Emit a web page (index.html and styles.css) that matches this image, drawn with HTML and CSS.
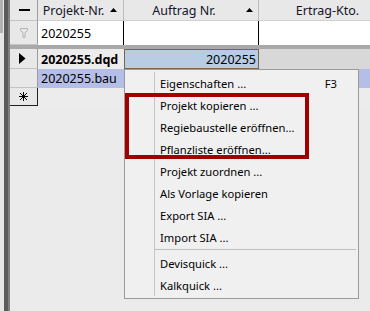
FILE: index.html
```html
<!DOCTYPE html>
<html>
<head>
<meta charset="utf-8">
<link rel="stylesheet" href="styles.css">
</head>
<body>
<div class="app">
  <div class="strip"><div class="strip-top"></div></div>
  <div class="grid">
    <!-- header -->
    <div class="sel sel-head"><span class="dash"></span></div>
    <div class="hd hd-proj"><span>Projekt-Nr.</span><svg class="sort" width="7" height="4" viewBox="0 0 7 4"><polygon points="0,4 7,4 3.5,0" fill="#000"/></svg></div>
    <div class="hd hd-auf"><span>Auftrag Nr.</span><svg class="sort" width="7" height="4" viewBox="0 0 7 4"><polygon points="0,4 7,4 3.5,0" fill="#000"/></svg></div>
    <div class="hd hd-ert"><span>Ertrag-Kto.</span></div>

    <!-- filter row -->
    <div class="sel sel-filter">
      <svg width="8" height="10" viewBox="0 0 8 10"><path d="M0.5 0.5 H7.5 V2.5 L5 4.5 V9.5 H3 V4.5 L0.5 2.5 Z" fill="none" stroke="#b4b4b4" stroke-width="1"/></svg>
    </div>
    <div class="flt flt-proj">2020255</div>
    <div class="flt flt-auf"></div>
    <div class="flt flt-ert"></div>

    <!-- separator -->
    <div class="gsep"></div>

    <!-- row 1 -->
    <div class="sel sel-r1"><svg width="7" height="11" viewBox="0 0 7 11"><polygon points="0,0 6.5,5.5 0,11" fill="#000"/></svg></div>
    <div class="c r1-proj">2020255.dqd</div>
    <div class="c r1-auf">2020255</div>
    <div class="c r1-ert"></div>

    <!-- row 2 -->
    <div class="sel sel-r2"></div>
    <div class="c r2-cell r2-proj">2020255.bau</div>
    <div class="c r2-cell"></div>
    <div class="c r2-cell"></div>

    <!-- row 3 (new row) -->
    <div class="sel sel-r3"><svg width="9" height="9" viewBox="0 0 9 9"><g stroke="#000" stroke-width="1"><line x1="4.5" y1="0" x2="4.5" y2="9"/><line x1="0" y1="4.5" x2="9" y2="4.5"/><line x1="1" y1="1" x2="8" y2="8"/><line x1="8" y1="1" x2="1" y2="8"/></g><rect x="3" y="3" width="3" height="3" fill="#000"/></svg></div>
    <div class="c r3-cell"></div>
    <div class="c r3-cell"></div>
    <div class="c r3-cell"></div>
  </div>

  <div class="menu">
    <div class="mi"><span>Eigenschaften ...</span><span>F3</span></div>
    <div class="mi"><span>Projekt kopieren ...</span></div>
    <div class="mi"><span>Regiebaustelle eröffnen...</span></div>
    <div class="mi"><span>Pflanzliste eröffnen...</span></div>
    <div class="mi"><span>Projekt zuordnen ...</span></div>
    <div class="mi"><span>Als Vorlage kopieren</span></div>
    <div class="mi"><span>Export SIA ...</span></div>
    <div class="mi"><span>Import SIA ...</span></div>
    <div class="msep"></div>
    <div class="mi"><span>Devisquick ...</span></div>
    <div class="mi"><span>Kalkquick ...</span></div>
  </div>
  <div class="highlight"></div>
</div>
</body>
</html>
```
FILE: styles.css
```css
html, body {
  margin: 0;
  padding: 0;
  background: #ebebeb;
  width: 370px;
  height: 311px;
  overflow: hidden;
}
body {
  font-family: "Noto Sans", "DejaVu Sans", sans-serif;
  font-size: 12.5px;
  color: #000;
}
.app {
  display: flex;
  height: 311px;
  position: relative;
}
.strip {
  width: 10px;
  flex: none;
  background: linear-gradient(to right, #e6e6e6 0, #e6e6e6 4px, #5b5b5b 4px, #5b5b5b 8px, #7f7f7f 8px, #7f7f7f 10px);
}
.strip-top {
  width: 3px;
  height: 33px;
  background: #b2b2b2;
}
.grid {
  display: grid;
  grid-template-columns: 28px 86px 135px 111px;
  grid-template-rows: 21px 24px 4px 20px 19px 18px;
  align-content: start;
  flex: none;
}
.sel {
  box-sizing: border-box;
  background: #e8e8e8;
  border-right: 1px solid #9c9c9c;
  border-bottom: 1px solid #c4c4c4;
  display: flex;
  align-items: center;
  justify-content: center;
}
.sel-head .dash {
  display: block;
  width: 11px;
  height: 2px;
  background: #000;
  margin-left: 2px;
}
.sel-r1 svg { margin-left: -2px; }
.sel-r3 {
  border-right: 1px solid #202020;
  border-bottom: 1px solid #202020;
}
.hd {
  box-sizing: border-box;
  background: #e8e8e8;
  border-right: 1px solid #bcbcbc;
  border-bottom: 1px solid #d0d0d0;
  color: #14142a;
  display: flex;
  align-items: center;
  justify-content: center;
  position: relative;
  padding-right: 14px;
}
.hd .sort {
  position: absolute;
  top: 8px;
}
.hd-proj .sort { right: 6px; }
.hd-auf .sort { right: 5px; }
.hd-ert {
  border-right: none;
  padding-right: 0;
  padding-left: 26px;
}
.flt {
  box-sizing: border-box;
  background: #fff;
  display: flex;
  align-items: center;
}
.flt-proj {
  padding-left: 3px;
  border-right: 1px solid #000;
}
.flt-auf { border-right: 1px solid #000; }
.gsep {
  grid-column: 1 / -1;
  background: #a9a9a9;
}
.c {
  box-sizing: border-box;
  display: flex;
  align-items: center;
  white-space: nowrap;
}
.r1-proj {
  background: #ececec;
  font-weight: bold;
  padding-left: 3px;
  overflow: hidden;
}
.r1-auf {
  background: #b8cce4;
  border: 1px solid #76664a;
  justify-content: flex-end;
  padding-right: 2px;
}
.r1-ert { background: #d8d8d8; }
.r2-cell { background: #b5bee6; }
.r2-proj { padding-left: 3px; }
.r3-cell { background: #ececec; }

.menu {
  position: absolute;
  left: 124px;
  top: 69px;
  width: 235px;
  height: 230px;
  box-sizing: border-box;
  background: #f0f0f0;
  border: 1px solid #9a9a9a;
  padding: 2px 0;
  font-size: 11.2px;
}
.menu::before {
  content: "";
  position: absolute;
  left: 29px;
  top: 2px;
  bottom: 2px;
  width: 1px;
  background: #c6c6c6;
}
.mi {
  height: 22px;
  display: flex;
  align-items: center;
  justify-content: space-between;
  padding-left: 35px;
  padding-right: 21px;
  white-space: nowrap;
}
.msep {
  height: 1px;
  background: #bdbdbd;
  margin: 1px 2px 2px 29px;
}
.highlight {
  position: absolute;
  left: 125px;
  top: 93px;
  width: 184px;
  height: 66px;
  box-sizing: border-box;
  border: 4px solid #a20000;
}
```
